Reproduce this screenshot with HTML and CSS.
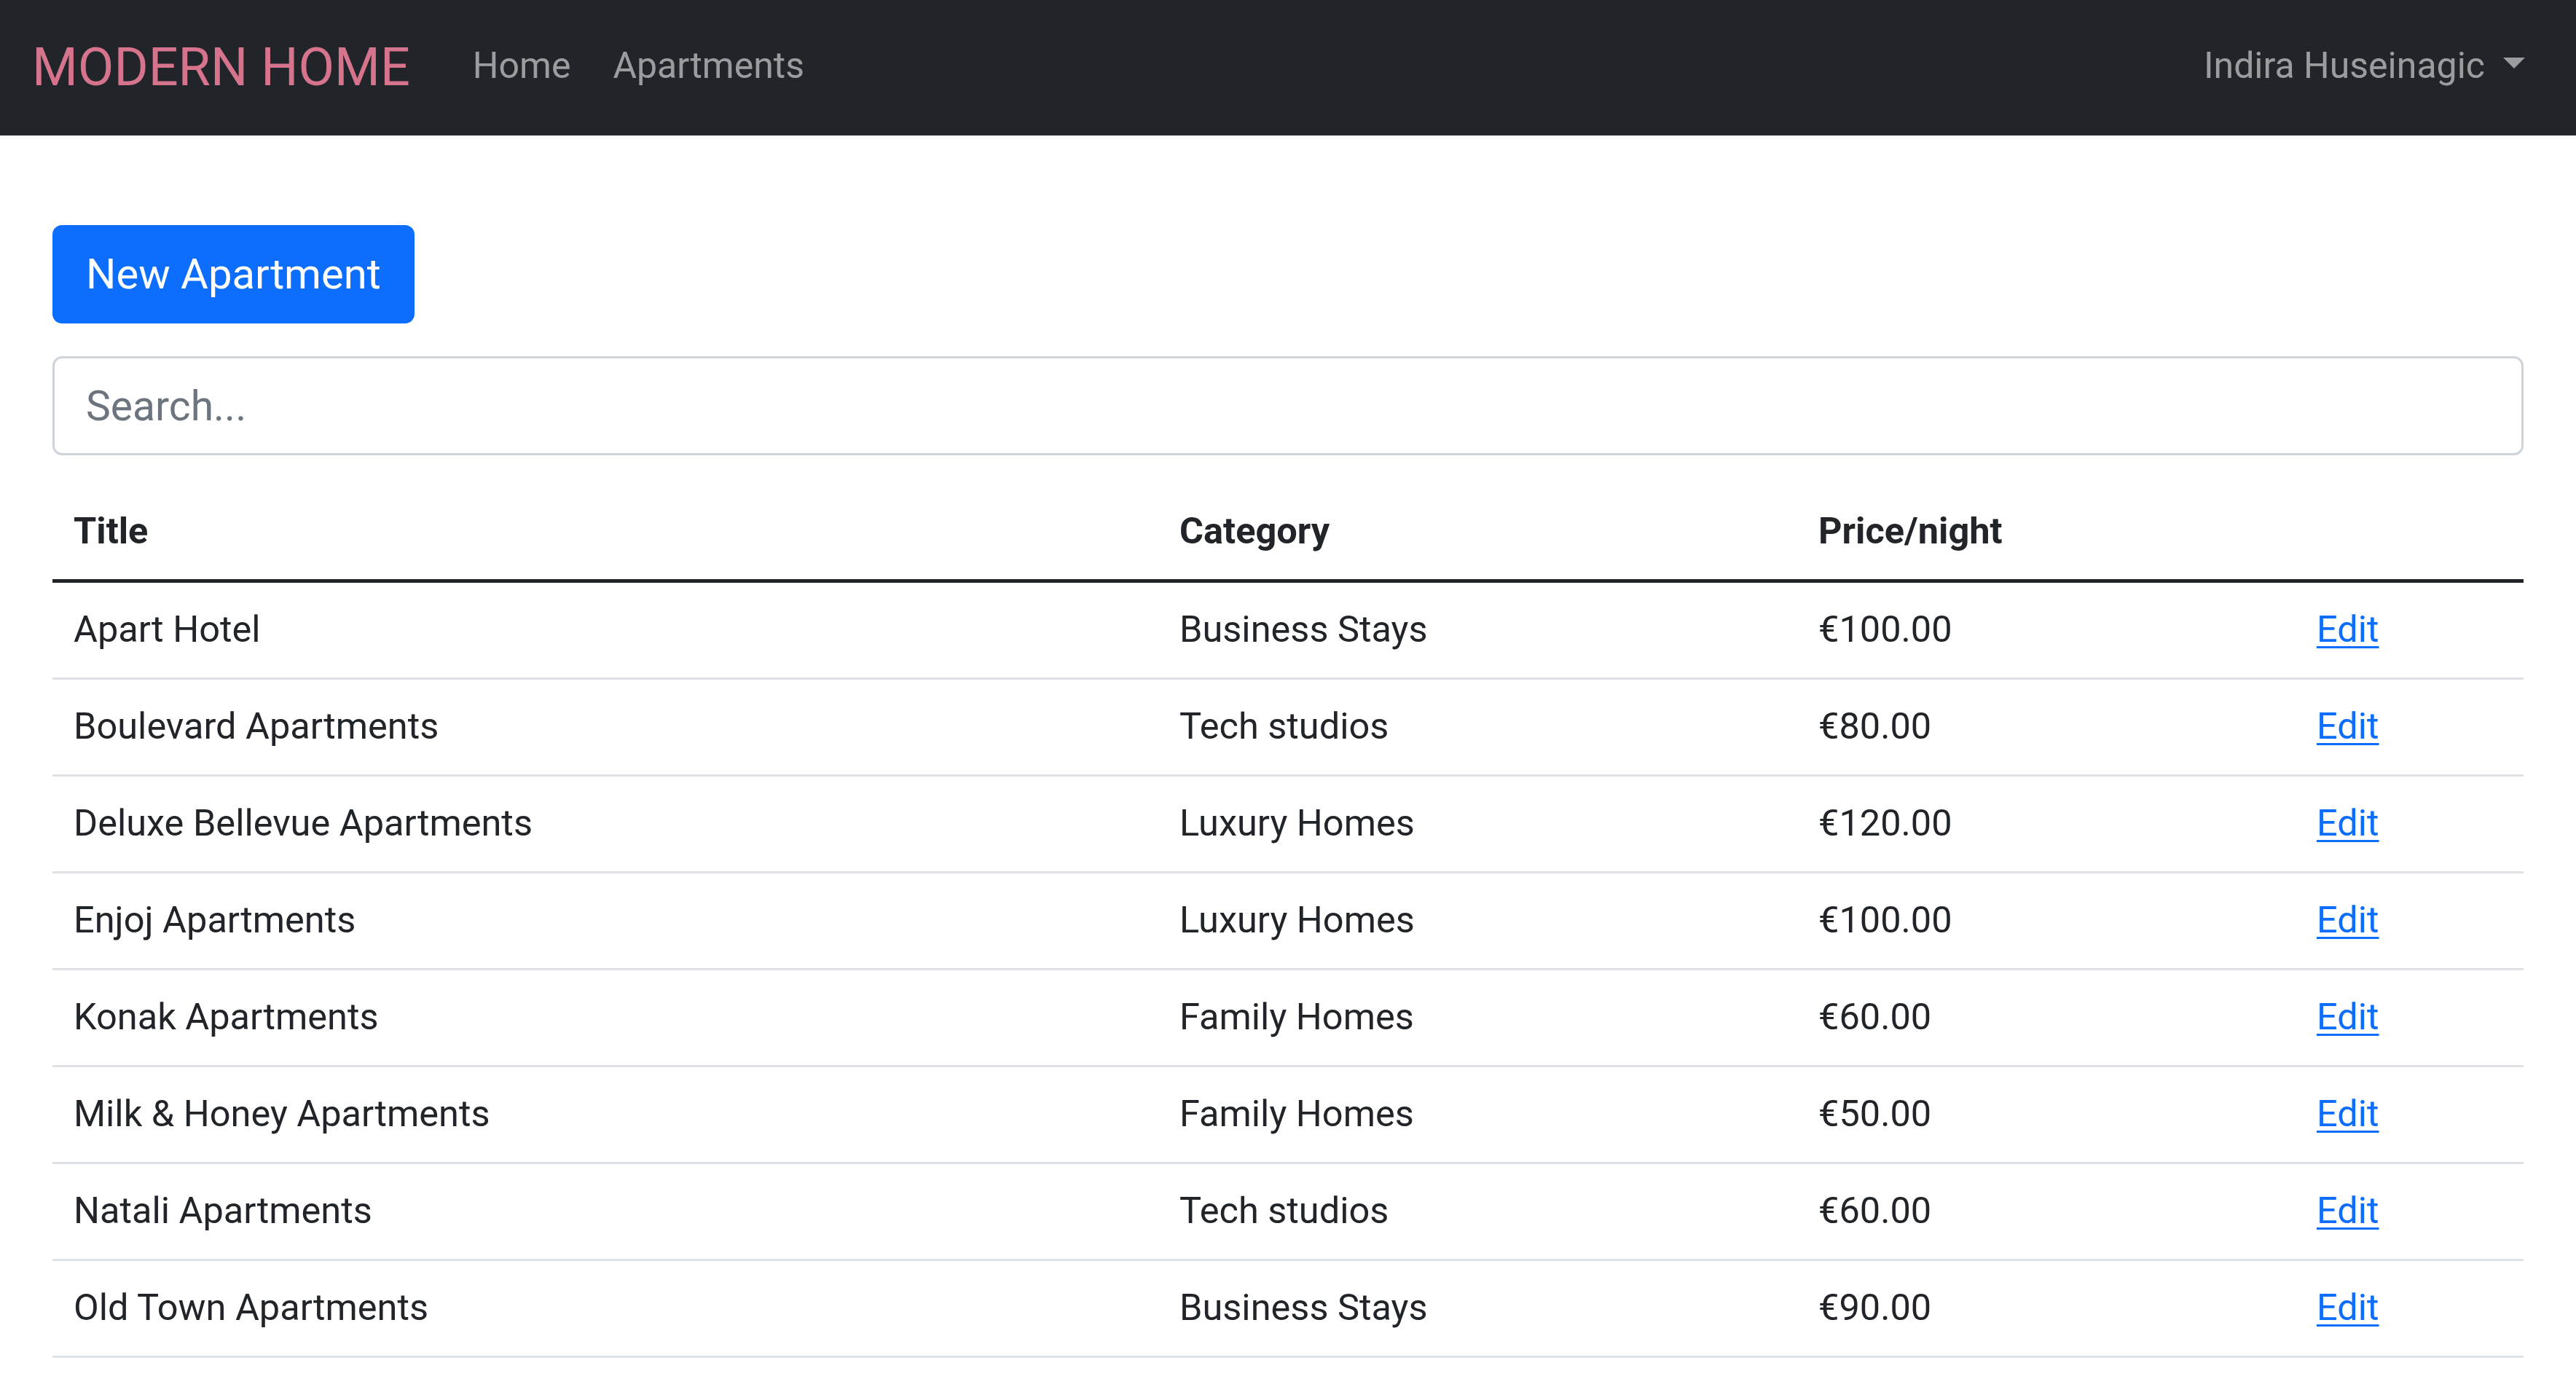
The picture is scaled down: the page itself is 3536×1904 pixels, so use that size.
FILE: index.html
```html
<!DOCTYPE html>
<html lang="en">
<head>
<meta charset="utf-8">
<title>Apartments - Modern Home</title>
<link rel="stylesheet" href="styles.css">
</head>
<body>
<header class="navbar">
  <a class="brand" href="#">MODERN HOME</a>
  <ul class="nav">
    <li><a class="nav-link" href="#">Home</a></li>
    <li><a class="nav-link" href="#">Apartments</a></li>
  </ul>
  <div class="user">
    <a class="nav-link dropdown-toggle" href="#">Indira Huseinagic<span class="caret"></span></a>
  </div>
</header>
<main class="container">
  <div class="actions">
    <a class="btn-primary" href="#">New Apartment</a>
  </div>
  <input class="search" type="text" placeholder="Search...">
  <table class="table">
    <colgroup>
      <col class="col-title">
      <col class="col-category">
      <col class="col-price">
      <col class="col-action">
    </colgroup>
    <thead>
      <tr><th>Title</th><th>Category</th><th>Price/night</th><th></th></tr>
    </thead>
    <tbody>
      <tr><td>Apart Hotel</td><td>Business Stays</td><td>€100.00</td><td><a href="#">Edit</a></td></tr>
      <tr><td>Boulevard Apartments</td><td>Tech studios</td><td>€80.00</td><td><a href="#">Edit</a></td></tr>
      <tr><td>Deluxe Bellevue Apartments</td><td>Luxury Homes</td><td>€120.00</td><td><a href="#">Edit</a></td></tr>
      <tr><td>Enjoj Apartments</td><td>Luxury Homes</td><td>€100.00</td><td><a href="#">Edit</a></td></tr>
      <tr><td>Konak Apartments</td><td>Family Homes</td><td>€60.00</td><td><a href="#">Edit</a></td></tr>
      <tr><td>Milk &amp; Honey Apartments</td><td>Family Homes</td><td>€50.00</td><td><a href="#">Edit</a></td></tr>
      <tr><td>Natali Apartments</td><td>Tech studios</td><td>€60.00</td><td><a href="#">Edit</a></td></tr>
      <tr><td>Old Town Apartments</td><td>Business Stays</td><td>€90.00</td><td><a href="#">Edit</a></td></tr>
    </tbody>
  </table>
</main>
</body>
</html>
```
FILE: styles.css
```css
html, body {
  margin: 0;
  padding: 0;
  background: #ffffff;
  color: #212529;
  font-family: Roboto, "Liberation Sans", Arial, sans-serif;
}

.navbar {
  display: flex;
  align-items: center;
  height: 186px;
  padding: 0 41px 0 44px;
  background: #212529;
  box-sizing: border-box;
}

.brand {
  font-size: 72px;
  line-height: 1.5;
  color: #d6738d;
  text-decoration: none;
  margin-right: 57px;
}

.nav {
  display: flex;
  list-style: none;
  margin: 0;
  padding: 0 0 6px 0;
}

.nav-link {
  display: block;
  padding: 0 29px;
  font-size: 50px;
  line-height: 1.5;
  color: rgba(255, 255, 255, 0.55);
  text-decoration: none;
}

.user {
  margin-left: auto;
  padding-bottom: 6px;
}

.caret {
  display: inline-block;
  margin-left: 25px;
  vertical-align: 0.255em;
  border-top: 15px solid rgba(255, 255, 255, 0.55);
  border-left: 15px solid transparent;
  border-right: 15px solid transparent;
  border-bottom: 0;
}

.container {
  padding: 0 72px;
}

.actions {
  padding-top: 123px;
}

.btn-primary {
  display: inline-block;
  padding: 24px 46px;
  font-size: 58px;
  line-height: 87px;
  color: #ffffff;
  background: #0d6efd;
  border-radius: 13px;
  text-decoration: none;
}

.search {
  display: block;
  width: 100%;
  box-sizing: border-box;
  margin-top: 45px;
  height: 136px;
  padding: 0 43px;
  font-family: Roboto, "Liberation Sans", Arial, sans-serif;
  font-size: 57px;
  color: #212529;
  background: #ffffff;
  border: 3px solid #ced4da;
  border-radius: 13px;
  outline: none;
}

.search::placeholder {
  color: #6c757d;
}

.table {
  width: 100%;
  margin-top: 40px;
  border-collapse: collapse;
  font-size: 50.5px;
}

.col-title { width: 1518px; }
.col-category { width: 877px; }
.col-price { width: 684px; }
.col-action { width: 313px; }

.table th,
.table td {
  padding: 26px 29px 28px;
  line-height: 76px;
  text-align: left;
  vertical-align: top;
  border-bottom: 3px solid #dee2e6;
}

.table th {
  font-weight: 700;
  border-bottom: 5px solid #212529;
}

.table td a {
  color: #0d6efd;
  text-decoration: underline;
  text-decoration-thickness: 3px;
  text-underline-offset: 6px;
}
```
